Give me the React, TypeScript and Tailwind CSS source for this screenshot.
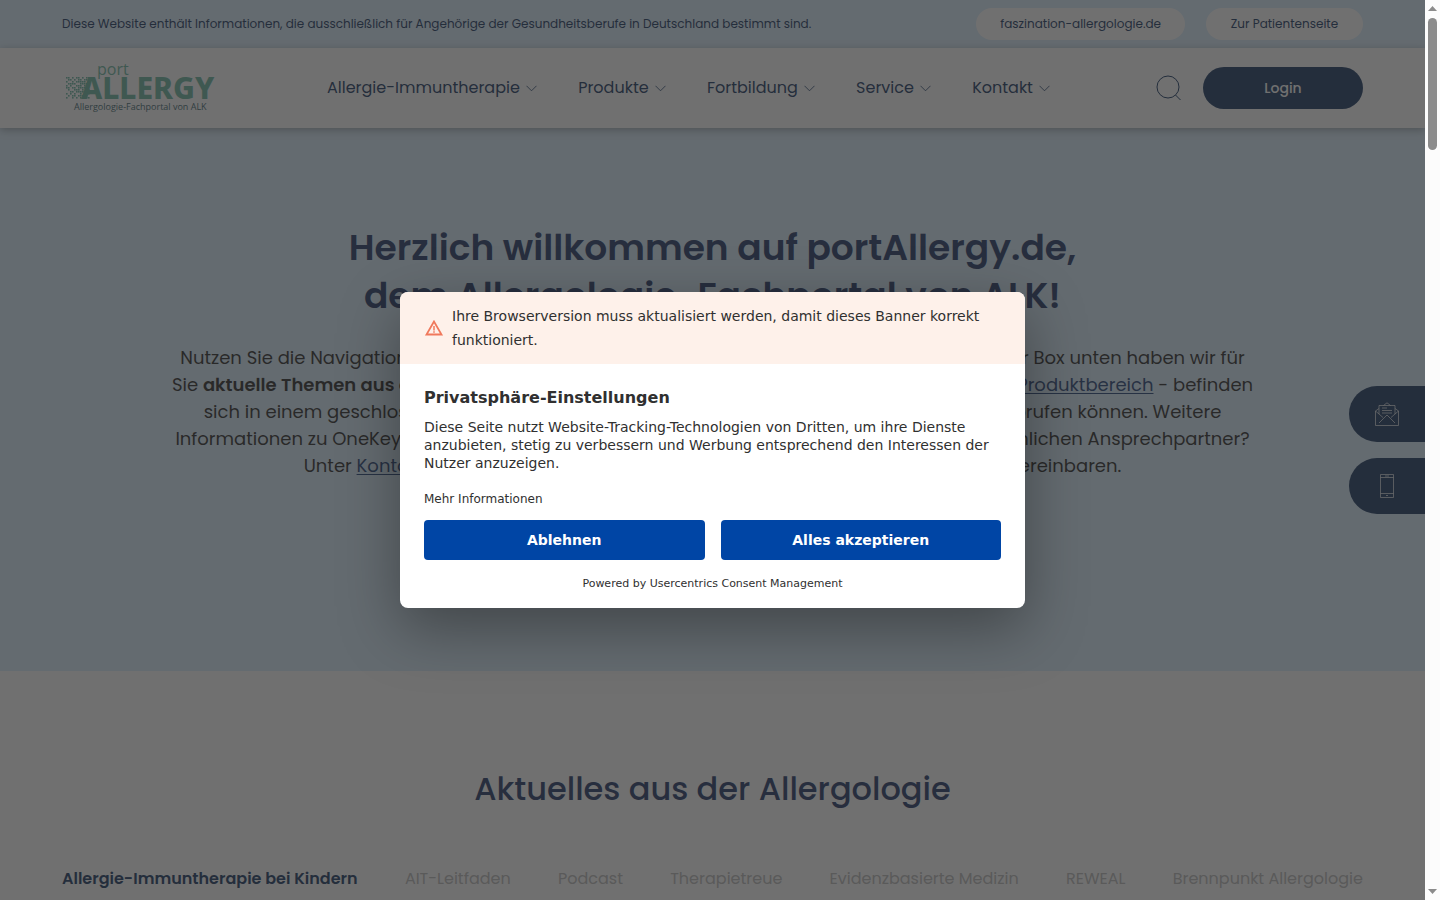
import React, { useState } from 'react';

const NAV_ITEMS = ['Allergie-Immuntherapie', 'Produkte', 'Fortbildung', 'Service', 'Kontakt'];

const TABS = [
  'Allergie-Immuntherapie bei Kindern',
  'AIT-Leitfaden',
  'Podcast',
  'Therapietreue',
  'Evidenzbasierte Medizin',
  'REWEAL',
  'Brennpunkt Allergologie',
];

// dots of the halftone edge left of the logo's "A"
const HALFTONE = [
  '110101101011',
  '011010110110',
  '100101111101',
  '011110011111',
  '101001110110',
  '110110111110',
  '010011101011',
  '001101111101',
  '101010010111',
  '010110111110',
  '100101011011',
];

function Logo() {
  return (
    <svg width="153" height="64" viewBox="0 -6 153 64" role="img" aria-label="portAllergy">
      <g fill="#5cb098">
        {HALFTONE.map((row, y) =>
          row.split('').map((dot, x) =>
            dot === '1' ? <rect key={`${x}-${y}`} x={4 + x * 2} y={15 + y * 2} width="1.6" height="1.6" /> : null
          )
        )}
        <text x="35" y="13" fontSize="16" fontWeight="400" fontFamily="'Open Sans', sans-serif">port</text>
        <text x="19" y="37" fontSize="30" fontWeight="800" fontFamily="'Noto Sans', sans-serif">ALLERGY</text>
      </g>
      <text x="12" y="48" fontSize="9" fontWeight="400" fill="#2a5560" fontFamily="'Open Sans', sans-serif">
        Allergologie-Fachportal von ALK
      </text>
    </svg>
  );
}

function Chevron() {
  return (
    <svg width="11" height="7" viewBox="0 0 11 7" fill="none" stroke="#002251" strokeWidth="0.8" aria-hidden="true">
      <path d="M.5 .8 5.5 5.8 10.5 .8" />
    </svg>
  );
}

function Header() {
  return (
    <header className="text-[#002251]">
      <div className="flex h-12 items-center bg-[#d8edfd] px-[62px] text-xs">
        <p className="flex-1">
          Diese Website enthält Informationen, die ausschließlich für Angehörige der Gesundheitsberufe in Deutschland bestimmt sind.
        </p>
        <a href="#faszination" className="rounded-full bg-white px-6 py-2 leading-4">faszination-allergologie.de</a>
        <a href="#patienten" className="ml-[21px] min-w-[157px] rounded-full bg-white py-2 text-center leading-4">Zur Patientenseite</a>
      </div>
      <div className="relative flex h-20 items-center bg-white px-[62px] shadow-[0_2px_8px_rgba(0,0,0,0.35)]">
        <a href="#start"><Logo /></a>
        <nav className="ml-28 flex flex-1 justify-between text-base">
          {NAV_ITEMS.map((item) => (
            <button key={item} className="flex items-center gap-1.5">
              {item}
              <Chevron />
            </button>
          ))}
        </nav>
        <button aria-label="Suche" className="ml-[106px]">
          <svg width="26" height="26" viewBox="0 0 26 26" fill="none" stroke="#002251">
            <circle cx="12" cy="12" r="11" />
            <path d="M19.5 20 24.5 25" />
          </svg>
        </button>
        <button className="ml-[21px] h-[42px] w-40 rounded-full bg-[#002251] text-sm font-medium text-white">Login</button>
      </div>
    </header>
  );
}

function Hero() {
  return (
    <section className="bg-[#d8edfd] pt-24 pb-48 text-center">
      <h1 className="text-4xl leading-12 font-semibold whitespace-nowrap text-[#0a2458]">
        Herzlich willkommen auf portAllergy.de,
        <br />
        dem Allergologie-Fachportal von ALK!
      </h1>
      <p className="mt-6 text-lg leading-[27px] whitespace-nowrap text-[#111]">
        Nutzen Sie die Navigation, um ganz schnell zu Ihren gewünschten Inhalten zu gelangen. Mit der Box unten haben wir für
        <br />
        Sie <strong className="font-semibold">aktuelle Themen aus der Allergologie</strong> zusammengestellt. Die meisten Inhalte - wie z.B. der{' '}
        <a href="#produkte" className="text-[#0a2f6b] underline underline-offset-2">Produktbereich</a> - befinden
        <br />
        sich in einem geschlossenen Bereich, den Sie mit dem persönlichen OneKey-Login direkt abrufen können. Weitere
        <br />
        Informationen zu OneKey finden Sie hier auf unserer Informationsseite. Sie suchen einen persönlichen Ansprechpartner?
        <br />
        Unter <a href="#kontakt" className="text-[#0a2f6b] underline underline-offset-2">Kontakt</a> können Sie sehr einfach und schnell einen Termin mit uns online vereinbaren.
      </p>
    </section>
  );
}

function News() {
  const [activeTab, setActiveTab] = useState(TABS[0]);

  return (
    <section className="bg-white px-[62px] pt-24 pb-10 text-[#0a2458]">
      <h2 className="text-center text-[32px] leading-11 font-medium">Aktuelles aus der Allergologie</h2>
      <div role="tablist" className="mt-14 flex justify-between text-base leading-6 whitespace-nowrap">
        {TABS.map((tab) => (
          <button
            key={tab}
            role="tab"
            aria-selected={tab === activeTab}
            onClick={() => setActiveTab(tab)}
            className={tab === activeTab ? 'font-semibold text-[#002251]' : 'text-[#b4b4b4]'}
          >
            {tab}
          </button>
        ))}
      </div>
    </section>
  );
}

function SideButtons() {
  return (
    <div className="absolute top-[386px] right-0 flex flex-col gap-4">
      <button aria-label="Newsletter" className="flex h-14 w-19 items-center rounded-l-full bg-[#002251] pl-[26px]">
        <svg width="24" height="24" viewBox="0 0 24 24" fill="none" stroke="#fff" strokeWidth="0.7">
          <path d="M4 6.5.5 9v14.5h23V9L20 6.5M.5 9l7.5 6.5M23.5 9 16 15.5M4 21l8-8 8 8" />
          <path d="M4 12V3.5h16V12M8.5 3.5 12 .8l3.5 2.7M7 6h5M7 8.5h10M7 11h10" />
        </svg>
      </button>
      <button aria-label="Telefon" className="flex h-14 w-19 items-center rounded-l-full bg-[#002251] pl-[31px]">
        <svg width="14" height="24" viewBox="0 0 14 24" fill="none" stroke="#fff" strokeWidth="0.7">
          <path d="M.5 .5h13v23H.5zM.5 3.5h13M.5 19.5h13M5 2h4M6 21.5h2" />
        </svg>
      </button>
    </div>
  );
}

function ConsentDialog() {
  return (
    <div className="absolute inset-0 flex items-center justify-center bg-[#333]/70 font-['DejaVu_Sans',sans-serif] text-[#303030]">
      <div
        role="dialog"
        aria-labelledby="consent-title"
        className="w-[625px] overflow-hidden rounded-lg bg-white shadow-[0_20px_60px_rgba(0,0,0,0.35)]"
      >
        <div className="flex items-center gap-2 bg-[#fef1ea] px-6 py-3 text-sm leading-6">
          <svg width="20" height="20" viewBox="0 0 20 20" fill="none" stroke="#f0795c" strokeWidth="1.8" className="shrink-0" aria-hidden="true">
            <path d="M10 3.5 2.5 16.5h15z" />
            <path d="M10 8v4.5M10 13.3v1.5" strokeWidth="1.5" />
          </svg>
          <p>Ihre Browserversion muss aktualisiert werden, damit dieses Banner korrekt funktioniert.</p>
        </div>
        <div className="px-6 pt-6 pb-4">
          <h2 id="consent-title" className="text-base leading-5 font-bold">Privatsphäre-Einstellungen</h2>
          <p className="mt-2.5 text-sm leading-[18px]">
            Diese Seite nutzt Website-Tracking-Technologien von Dritten, um ihre Dienste anzubieten, stetig zu verbessern und
            Werbung entsprechend den Interessen der Nutzer anzuzeigen.
          </p>
          <button className="mt-[19px] block text-xs leading-4">Mehr Informationen</button>
          <div className="mt-[13px] grid grid-cols-2 gap-4 text-sm font-bold text-white">
            <button className="h-10 rounded bg-[#0045a5]">Ablehnen</button>
            <button className="h-10 rounded bg-[#0045a5]">Alles akzeptieren</button>
          </div>
          <p className="mt-4 text-center text-[11px] leading-4">
            Powered by <a href="#usercentrics">Usercentrics Consent Management</a>
          </p>
        </div>
      </div>
    </div>
  );
}

function Scrollbar() {
  return (
    <div className="flex w-[15px] shrink-0 flex-col items-center bg-[#fcfcfc] py-1.5" aria-hidden="true">
      <svg width="9" height="5" viewBox="0 0 9 5" fill="#8b8b8b"><path d="M0 5 4.5 0 9 5z" /></svg>
      <div className="mt-[7px] h-[132px] w-[9px] rounded-full bg-[#8b8b8b]" />
      <svg width="9" height="5" viewBox="0 0 9 5" fill="#8b8b8b" className="mt-auto"><path d="M0 0h9L4.5 5z" /></svg>
    </div>
  );
}

export default function App() {
  return (
    <div className="flex h-screen font-['Poppins','Inter',sans-serif]">
      <div className="relative flex-1 overflow-hidden">
        <Header />
        <Hero />
        <News />
        <SideButtons />
        <ConsentDialog />
      </div>
      <Scrollbar />
    </div>
  );
}
